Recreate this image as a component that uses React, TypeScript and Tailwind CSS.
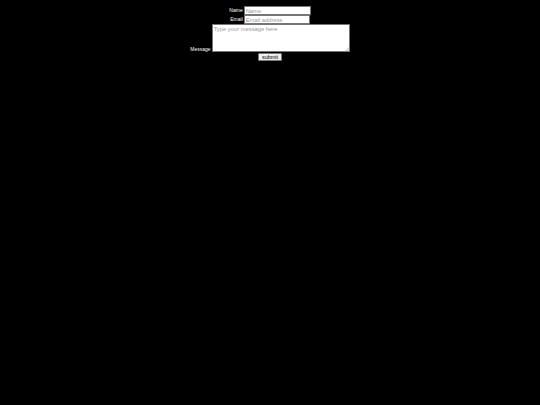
import React from "react";

export default function App() {
  return (
    <div className="w-[540px] h-[405px] bg-black overflow-hidden" style={{ fontFamily: '"Liberation Sans", Arial, sans-serif' }}>
      <form className="flex flex-col items-center pt-[6px]">
        <div className="flex items-end gap-[1px]">
          <label className="text-white text-[5px] leading-[7px] pb-[1px]">Name</label>
          <input
            placeholder="Name"
            className="w-[67px] h-[9px] bg-white border border-[#767676] px-[1px] text-[5.8px] leading-[7px] text-black placeholder:text-[#9a9a9a] outline-none"
          />
        </div>
        <div className="flex items-end gap-[1px]">
          <label className="text-white text-[5px] leading-[7px] pb-[1px]">Email</label>
          <input
            placeholder="Email address"
            className="w-[66px] h-[9px] bg-white border border-[#767676] px-[1px] text-[5.8px] leading-[7px] text-black placeholder:text-[#9a9a9a] outline-none"
          />
        </div>
        <div className="flex items-end gap-[1px]">
          <label className="text-white text-[5px] leading-[5px]">Message</label>
          <div className="relative">
            <textarea
              placeholder="Type your message here"
              className="block w-[138px] h-[28px] bg-white border border-[#767676] px-[1px] py-0 text-[5.8px] leading-[8px] text-black placeholder:text-[#9a9a9a] outline-none resize-none"
            />
            <svg className="absolute right-[1px] bottom-[1px]" width="4" height="4" viewBox="0 0 4 4">
              <path d="M4 0.5 L0.5 4 M4 2.5 L2.5 4" stroke="#8a8a8a" strokeWidth="0.6" />
            </svg>
          </div>
        </div>
        <button
          type="button"
          className="mt-[1px] w-[24px] h-[8px] bg-[#efefef] border border-[#767676] rounded-[1px] text-black text-[5.5px] leading-[6px] flex items-center justify-center p-0"
        >
          submit
        </button>
      </form>
    </div>
  );
}
